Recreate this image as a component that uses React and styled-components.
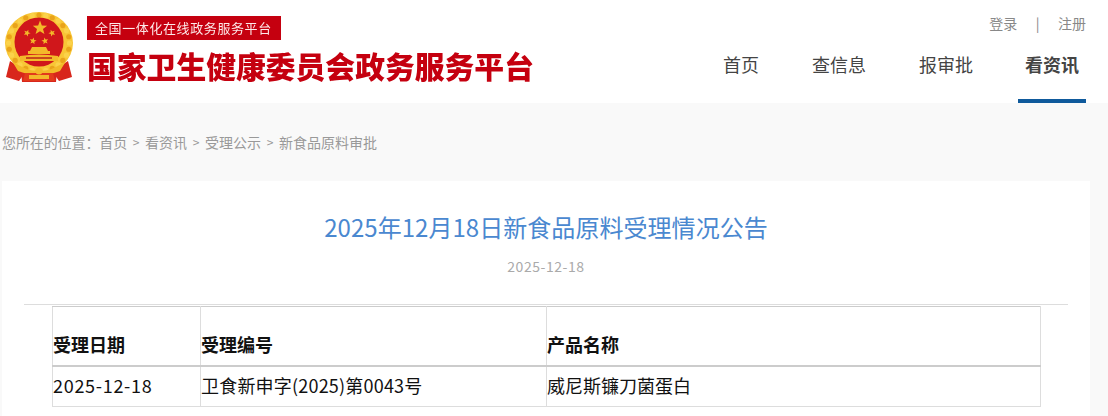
import React from "react";
import styled, { createGlobalStyle } from "styled-components";

const Global = createGlobalStyle`
  html, body { margin: 0; padding: 0; overflow: hidden; background: #f9f9f9; }
  body { font-family: "Noto Sans CJK SC", "Open Sans", sans-serif; }
`;
const Header = styled.header`
  height: 103px; background: #fff; display: flex; justify-content: space-between;
`;
const Brand = styled.div`display: flex; align-items: flex-start; padding: 11px 0 0 4px; gap: 13px;`;
const BrandText = styled.div`display: flex; flex-direction: column; align-items: flex-start; padding-top: 5px; filter: blur(0.35px);`;
const Badge = styled.div`
  width: 194px; height: 24px; background: #c5000f; color: #fde8e8; font-size: 13px; line-height: 24px;
  padding-left: 8px; box-sizing: border-box; white-space: nowrap; letter-spacing: 0.6px;
`;
const SiteName = styled.div`
  margin-top: 4px; color: #c5000f; font-size: 29.8px; line-height: 42px; font-weight: 900; white-space: nowrap;
`;
const Side = styled.div`display: flex; flex-direction: column; align-items: flex-end; padding-right: 22px;`;
const UserLinks = styled.div`
  display: flex; align-items: center; gap: 18.5px; height: 20px; margin-top: 13px; font-size: 14px; line-height: 20px; color: #888;
`;
const Nav = styled.nav`display: flex; gap: 39px; margin-top: 12px;`;
const NavItem = styled.a`
  padding: 0 7px; height: 58px; box-sizing: border-box; text-align: center; font-size: 18px; line-height: 38px;
  color: #444; font-weight: ${p => (p.$active ? 700 : 400)};
  margin-left: ${p => (p.$active ? "-1px" : "0")};
  border-bottom: 4px solid ${p => (p.$active ? "#0f5a9c" : "transparent")};
`;
const Crumbs = styled.div`
  height: 78px; box-sizing: border-box; padding: 29px 0 0 2px; display: flex; font-size: 14px; line-height: 20px; color: #999;
`;
const CrumbHome = styled.span`letter-spacing: -0.1px;`;
const Sep = styled.span`width: 18px; text-align: center; font-size: 12px; flex: none;`;
const Panel = styled.main`
  margin: 0 18px 0 2px; background: #fff; padding: 0 22px; height: 235px; box-sizing: border-box; 
`;
const Title = styled.h1`
  margin: 0; padding-top: 28px; text-align: center; font-size: 24px; line-height: 36px; font-weight: 400; color: #4a88d0; letter-spacing: 0.05px;
`;
const DateLine = styled.div`
  margin-top: 11px; text-align: center; font-size: 14px; line-height: 20px; color: #aaa; letter-spacing: 0.55px;
`;
const Rule = styled.hr`margin: 28px 0 0; border: 0; border-top: 1px solid #ddd;`;
const Table = styled.table`
  margin: 1px 0 0 28px; width: 989px; border-collapse: collapse; table-layout: fixed; color: #111; font-size: 18px;
`;
const HeadCell = styled.th`
  border: 1px solid #ddd; border-top-color: #ccc; border-bottom: 2px solid #ccc; height: 59px; padding: 0 0 8px 0; text-align: left; vertical-align: bottom;
  font-weight: 700; line-height: 26px; box-sizing: border-box;
`;
const Cell = styled.td`
  border: 1px solid #ddd; height: 41px; padding: 0 0 3px 0; line-height: 26px; box-sizing: border-box;
  letter-spacing: ${p => p.$spacing || "0"};
`;
const EmblemArt = styled.svg`flex: none; filter: blur(0.4px);`;

const Star = ({ cx, cy, r, rot = 0 }) => {
  const pts = Array.from({ length: 10 }, (_, i) => {
    const a = (Math.PI / 5) * i - Math.PI / 2 + rot;
    const rr = i % 2 ? r * 0.42 : r;
    return `${(cx + rr * Math.cos(a)).toFixed(2)},${(cy + rr * Math.sin(a)).toFixed(2)}`;
  }).join(" ");
  return <polygon points={pts} fill="#f3b92a" />;
};

const leaves = Array.from({ length: 28 }, (_, i) => {
  const a = (Math.PI * 2 * i) / 28;
  return [35 + 30.5 * Math.cos(a), 32 + 28 * Math.sin(a)];
});

const Emblem = () => (
  <EmblemArt width="70" height="72" viewBox="0 0 70 72">
    <path d="M6 50 L2 66 L15 70 L22 60 Z M64 50 L68 66 L55 70 L48 60 Z" fill="#d8261c" />
    <path d="M17 60 L53 60 L52 71 L18 71 Z" fill="#d8261c" />
    <ellipse cx="35" cy="32" rx="34" ry="31" fill="#f8c636" />
    {leaves.map(([x, y], i) => (
      <circle key={i} cx={x} cy={y} r="2.6" fill={i % 2 ? "#e9a31a" : "#fbd24a"} />
    ))}
    <circle cx="35" cy="31" r="24.5" fill="#d0171b" />
    <Star cx={36} cy={17} r={7.5} />
    <Star cx={23} cy={22} r={3.6} rot={0.4} />
    <Star cx={48} cy={22} r={3.6} rot={-0.4} />
    <Star cx={29} cy={30} r={3.6} rot={0.2} />
    <Star cx={41} cy={30} r={3.6} rot={-0.2} />
    <path d="M28 36 H42 L44 40 H26 Z M24 40 H46 V43 H24 Z M16 45 Q35 42 54 45 L54 50 H16 Z" fill="#f3b92a" />
    <path d="M22 46 H48 V48 H22 Z" fill="#c8481c" />
    <path d="M8 50 Q35 70 62 50 L56 60 Q35 68 14 60 Z" fill="#f3b92a" />
    <path d="M21 62 H49 L51 70 H19 Z" fill="#e23a1c" />
    <circle cx="35" cy="60" r="3.5" fill="#f3b92a" />
    <rect x="25" y="64" width="20" height="4" fill="#f3b92a" />
  </EmblemArt>
);

export default function App() {
  return (
    <>
      <Global />
      <Header>
        <Brand>
          <Emblem />
          <BrandText>
            <Badge>全国一体化在线政务服务平台</Badge>
            <SiteName>国家卫生健康委员会政务服务平台</SiteName>
          </BrandText>
        </Brand>
        <Side>
          <UserLinks>
            <span>登录</span>
            <span>|</span>
            <span>注册</span>
          </UserLinks>
          <Nav>
            <NavItem>首页</NavItem>
            <NavItem>查信息</NavItem>
            <NavItem>报审批</NavItem>
            <NavItem $active>看资讯</NavItem>
          </Nav>
        </Side>
      </Header>
      <Crumbs>
        <CrumbHome>您所在的位置：首页</CrumbHome><Sep>&gt;</Sep>
        <span>看资讯</span><Sep>&gt;</Sep>
        <span>受理公示</span><Sep>&gt;</Sep>
        <span>新食品原料审批</span>
      </Crumbs>
      <Panel>
        <Title>2025年12月18日新食品原料受理情况公告</Title>
        <DateLine>2025-12-18</DateLine>
        <Rule />
        <Table>
          <colgroup>
            <col width="148" /><col width="346" /><col width="494" />
          </colgroup>
          <thead>
            <tr><HeadCell>受理日期</HeadCell><HeadCell>受理编号</HeadCell><HeadCell>产品名称</HeadCell></tr>
          </thead>
          <tbody>
            <tr><Cell $spacing="0.7px">2025-12-18</Cell><Cell $spacing="0.2px">卫食新申字(2025)第0043号</Cell><Cell>威尼斯镰刀菌蛋白</Cell></tr>
          </tbody>
        </Table>
      </Panel>
    </>
  );
}
